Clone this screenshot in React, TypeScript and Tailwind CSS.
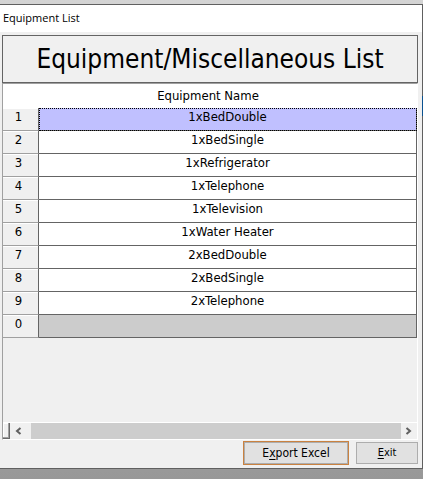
import { useState } from "react";

const items = [
  "1xBedDouble",
  "1xBedSingle",
  "1xRefrigerator",
  "1xTelephone",
  "1xTelevision",
  "1xWater Heater",
  "2xBedDouble",
  "2xBedSingle",
  "2xTelephone",
];

const rowHead =
  "h-[23px] w-9 border-r border-b border-r-[#646464] border-b-[#a0a0a0] bg-[#f0f0f0] p-0 pr-1 pb-1 text-center align-middle font-normal leading-4 shadow-[inset_0_1px_0_#fff]";
const cell =
  "h-[23px] border-r border-b border-[#646464] p-0 pb-1 text-center align-middle leading-4";

function Chevron({ d }: { d: string }) {
  return (
    <svg width="8" height="8" viewBox="0 0 8 8" fill="none" stroke="#606060" strokeWidth="2" aria-hidden="true">
      <path d={d} />
    </svg>
  );
}

export default function App() {
  const [selected, setSelected] = useState(0);

  return (
    <div className="relative bg-linear-to-b from-[#d4d4d4] to-[#989898] pt-1 pb-[10px] font-['DejaVu_Sans_Condensed','DejaVu_Sans',sans-serif] text-[13px] text-black">
      <main className="border-y border-r border-[#606060] bg-[#f0f0f0]">
        <header className="flex h-[27px] items-center bg-white pl-[3px] font-['Open_Sans',sans-serif] text-[11px]">
          Equipment List
        </header>

        <div className="pt-[3px] pr-1 pb-[3px] pl-0.5">
          <h1 className="flex h-12 items-center justify-center border border-[#646464] text-[26px] leading-8 whitespace-nowrap">
            Equipment/Miscellaneous List
          </h1>

          <section className="flex h-[357px] flex-col border-t border-r border-b border-l border-t-[#a0a0a0] border-r-white border-b-white border-l-[#a0a0a0]">
            <table className="w-full table-fixed border-separate border-spacing-0">
              <thead>
                <tr className="bg-white">
                  <td className="h-6 w-9 p-0" />
                  <th scope="col" className="h-6 p-0 pr-10 text-center align-middle leading-4 font-normal">
                    Equipment Name
                  </th>
                </tr>
              </thead>
              <tbody>
                {items.map((name, i) => (
                  <tr key={name} onClick={() => setSelected(i)}>
                    <th scope="row" className={rowHead}>{i + 1}</th>
                    <td
                      className={`${cell} ${
                        i === selected
                          ? "bg-[#c0c0ff] outline outline-dotted -outline-offset-1 outline-black"
                          : "bg-white"
                      }`}
                    >
                      {name}
                    </td>
                  </tr>
                ))}
                <tr>
                  <th scope="row" className={rowHead}>0</th>
                  <td className={`${cell} bg-[#cccccc]`} />
                </tr>
              </tbody>
            </table>

            <div className="mt-auto flex h-[17px] items-stretch border-t border-white">
              <div className="w-[7px] border-r border-b border-[#696969] shadow-[inset_-1px_-1px_0_#a0a0a0,inset_1px_1px_0_#fff]" />
              <button type="button" aria-label="Scroll left" className="flex w-[21px] items-center pl-1">
                <Chevron d="M6.5 1 3 4 6.5 7" />
              </button>
              <div className="flex-1 bg-[#cdcdcd]" />
              <button type="button" aria-label="Scroll right" className="flex w-4 items-center justify-center">
                <Chevron d="M1.5 1 5 4 1.5 7" />
              </button>
            </div>
          </section>

          <footer className="flex items-center justify-end gap-[7px] pt-px">
            <button type="button" className="h-6 w-[106px] border border-[#ca8240] bg-[#e1e1e1] text-xs leading-4 shadow-[inset_0_0_0_1px_#adadad]">
              E<span className="underline underline-offset-2">x</span>port Excel
            </button>
            <button type="button" className="h-[22px] w-[62px] border border-[#adadad] bg-[#e1e1e1] text-[11px] leading-4">
              <span className="underline underline-offset-2">E</span>xit
            </button>
          </footer>
        </div>
      </main>
      <div className="absolute top-24 right-0 h-5 w-px bg-[#0b5290]" />
    </div>
  );
}
